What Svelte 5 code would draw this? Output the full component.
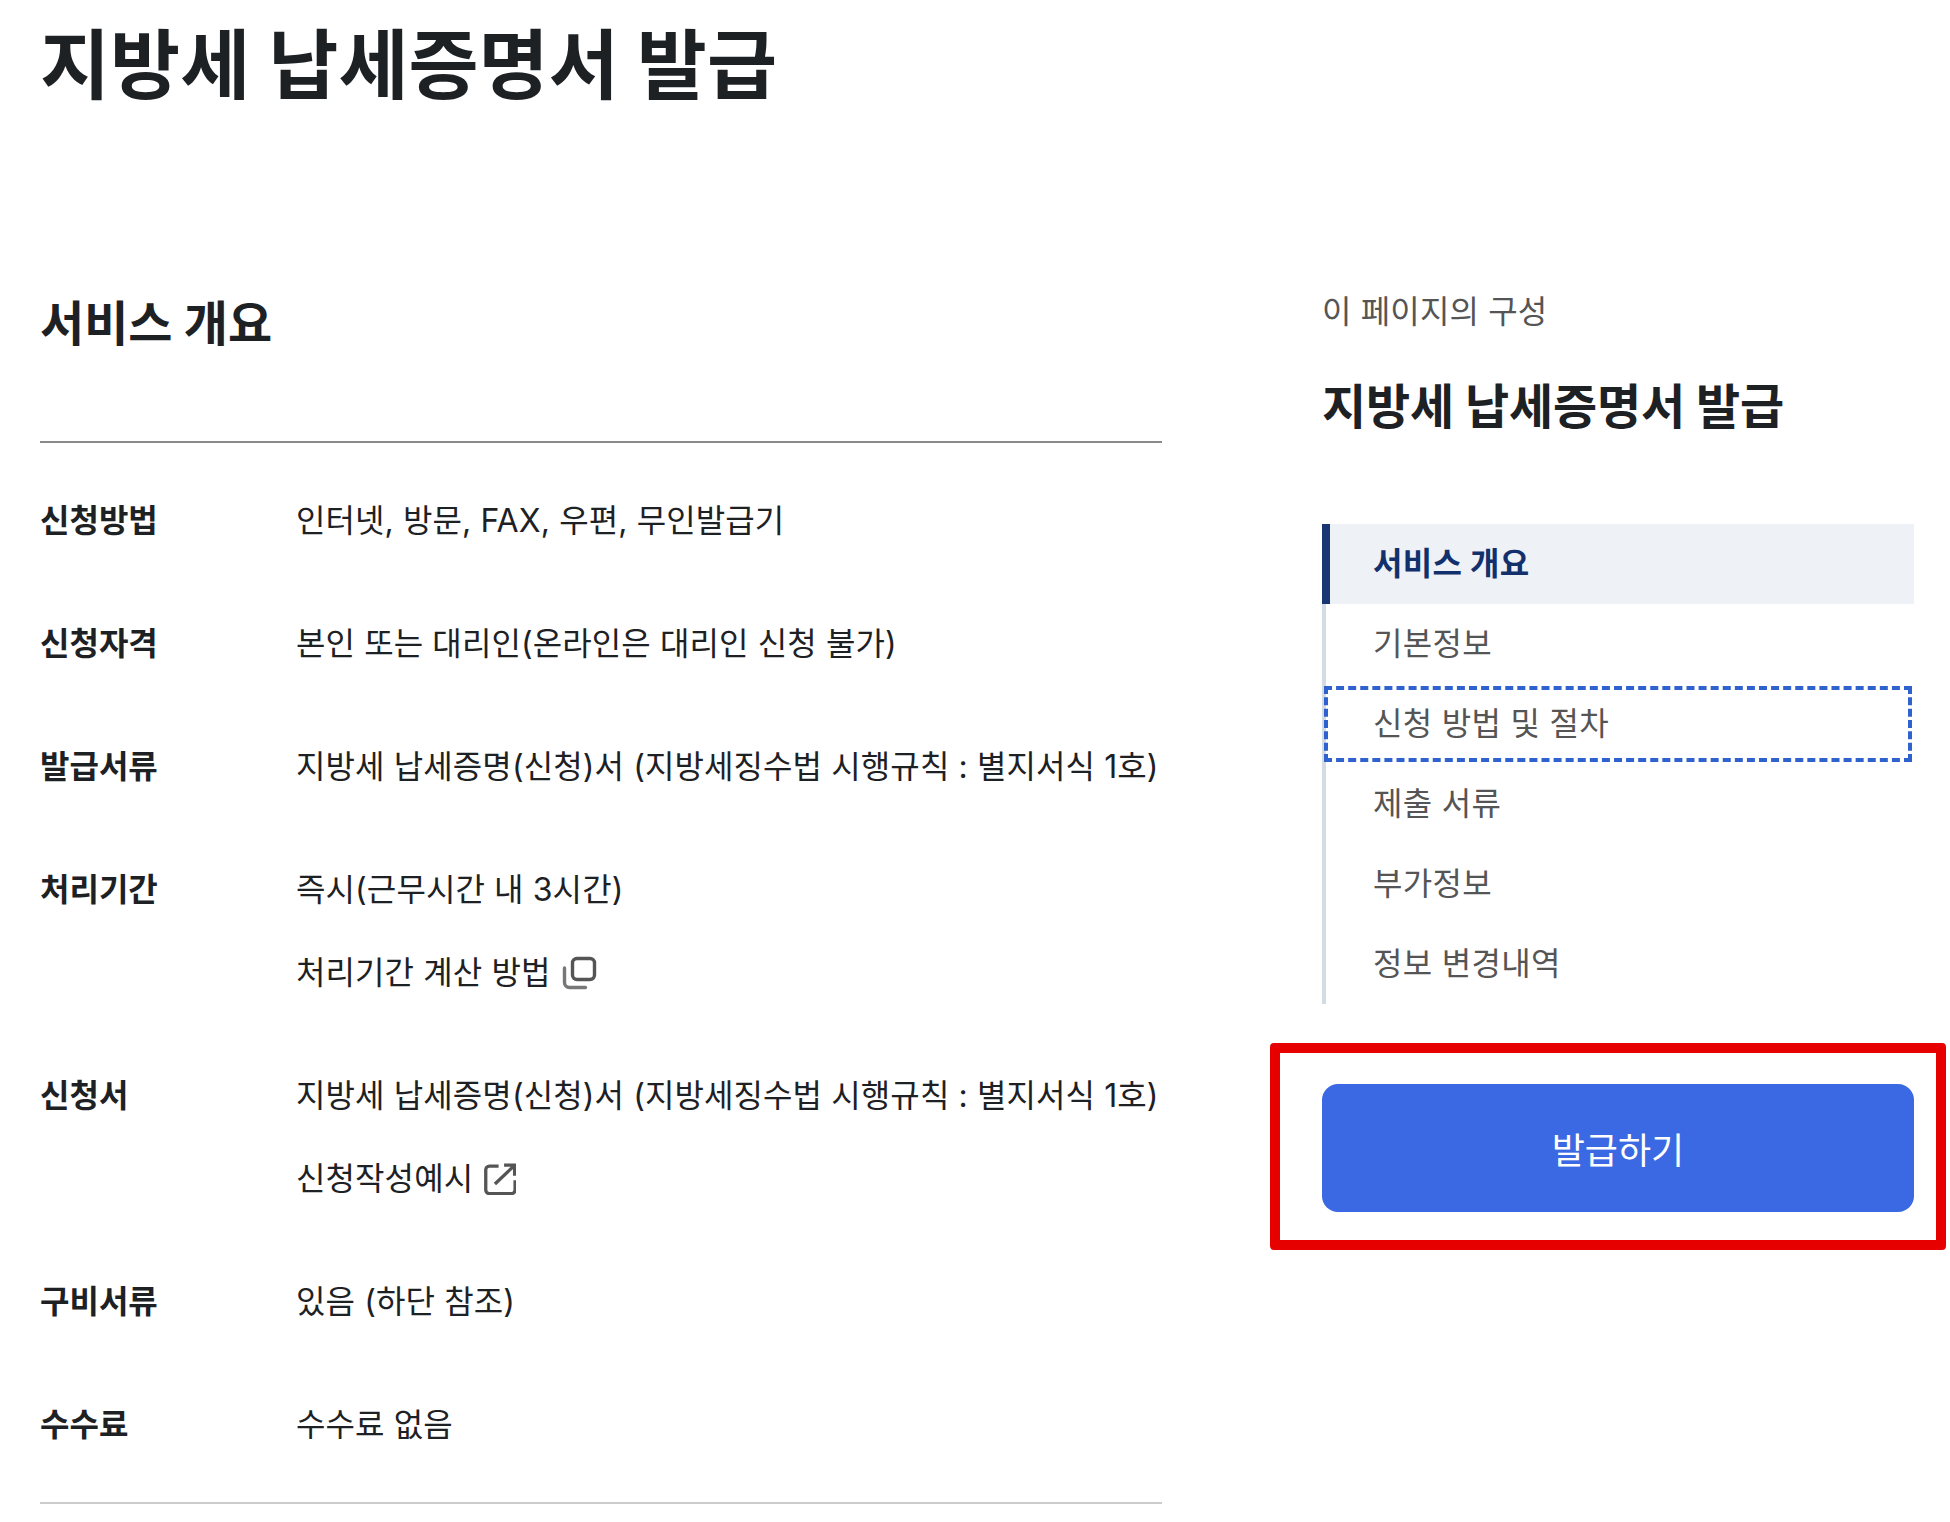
<script>
  const rows = [
    { label: "신청방법", lines: [{ text: "인터넷, 방문, FAX, 우편, 무인발급기" }] },
    { label: "신청자격", lines: [{ text: "본인 또는 대리인(온라인은 대리인 신청 불가)" }] },
    { label: "발급서류", lines: [{ text: "지방세 납세증명(신청)서 (지방세징수법 시행규칙 : 별지서식 1호)" }] },
    { label: "처리기간", lines: [{ text: "즉시(근무시간 내 3시간)" }, { text: "처리기간 계산 방법", icon: "copy" }] },
    { label: "신청서", lines: [{ text: "지방세 납세증명(신청)서 (지방세징수법 시행규칙 : 별지서식 1호)" }, { text: "신청작성예시", icon: "link" }] },
    { label: "구비서류", lines: [{ text: "있음 (하단 참조)" }] },
    { label: "수수료", lines: [{ text: "수수료 없음" }] }
  ];

  const navItems = ["서비스 개요", "기본정보", "신청 방법 및 절차", "제출 서류", "부가정보", "정보 변경내역"];
</script>

<div class="page">
  <h1 class="page-title">지방세 납세증명서 발급</h1>

  <div class="columns">
    <main class="content">
      <h2 class="section-title">서비스 개요</h2>
      <dl class="info-list">
        {#each rows as row}
          <div class="info-row">
            <dt class="info-label">{row.label}</dt>
            <dd class="info-value">
              {#each row.lines as line}
                <div class="info-line">
                  <span>{line.text}</span>
                  {#if line.icon === "copy"}
                    <svg class="icon copy" viewBox="0 0 36 36" fill="none" stroke="#555" stroke-width="3.4" aria-hidden="true">
                      <rect x="11.5" y="3.5" width="22" height="21" rx="4.5" />
                      <path d="M3.5 13v14.5a5 5 0 0 0 5 5h16" stroke-linecap="round" stroke="#777" />
                    </svg>
                  {:else if line.icon === "link"}
                    <svg class="icon link" viewBox="0 0 36 36" fill="none" stroke="#555" stroke-width="3.6" aria-hidden="true">
                      <path d="M17 4.5H7a4 4 0 0 0-4 4v22a4 4 0 0 0 4 4h24a4 4 0 0 0 4-4V20" />
                      <path d="M13 24 33 5M23 3.5h11.5V15" />
                    </svg>
                  {/if}
                </div>
              {/each}
            </dd>
          </div>
        {/each}
      </dl>
    </main>

    <aside class="side">
      <p class="side-caption">이 페이지의 구성</p>
      <h2 class="side-title">지방세 납세증명서 발급</h2>
      <ul class="side-nav">
        {#each navItems as item, i}
          <li class="nav-item" class:active={i === 0} class:focused={i === 2}>{item}</li>
        {/each}
      </ul>
      <div class="highlight">
        <button class="issue-button" type="button">발급하기</button>
      </div>
    </aside>
  </div>
</div>

<style>
  :global(body) {
    margin: 0;
    background: #fff;
  }

  .page {
    box-sizing: border-box;
    width: 1950px;
    height: 1522px;
    padding: 0 4px 0 40px;
    overflow: hidden;
    color: #1e2124;
    font-family: Inter, "Noto Sans CJK KR", sans-serif;
  }

  .page-title {
    margin: 0;
    font-size: 76.2px;
    font-weight: 700;
    line-height: 130px;
  }

  .columns {
    display: flex;
    align-items: flex-start;
    margin-top: 163px;
  }

  .content {
    flex: 0 0 1122px;
  }

  .section-title {
    margin: 0;
    padding-bottom: 86px;
    border-bottom: 2px solid #8a8a8a;
    font-size: 48px;
    font-weight: 700;
    line-height: 62px;
  }

  .info-list {
    margin: 0;
    padding: 36px 0 36px;
    border-bottom: 2px solid #ccc;
  }

  .info-row {
    display: flex;
    padding-bottom: 40px;
  }

  .info-row:last-child {
    padding-bottom: 0;
  }

  .info-label {
    flex: 0 0 256px;
    font-size: 32px;
    font-weight: 700;
    line-height: 83px;
  }

  .info-value {
    display: flex;
    flex-direction: column;
    margin: 0;
    font-size: 32px;
    letter-spacing: 0.1px;
    line-height: 83px;
  }

  .info-line {
    display: flex;
    align-items: center;
    gap: 12px;
    white-space: nowrap;
  }

  .icon {
    width: 36px;
    height: 36px;
  }

  .icon.copy {
    margin-left: -2px;
  }

  .icon.link {
    width: 33px;
    height: 33px;
    margin-left: -2px;
  }

  .side {
    flex: 0 0 592px;
    margin-top: -4px;
    margin-left: 160px;
  }

  .side-caption {
    margin: 0;
    color: #555;
    font-size: 32px;
    letter-spacing: 0.15px;
    line-height: 46px;
  }

  .side-title {
    margin: 41px 0 0;
    font-size: 48px;
    font-weight: 700;
    letter-spacing: -0.2px;
    line-height: 62px;
  }

  .side-nav {
    margin: 86px 0 0;
    padding: 0;
    list-style: none;
  }

  .nav-item {
    box-sizing: border-box;
    height: 80px;
    padding-left: 47px;
    border-left: 4px solid #d3dbe5;
    color: #555;
    font-size: 32px;
    letter-spacing: 0.3px;
    line-height: 80px;
  }

  .nav-item.active {
    padding-left: 43px;
    border-left: 8px solid #1a3672;
    background: #eef1f6;
    color: #12306b;
    font-weight: 700;
  }

  .nav-item.focused {
    outline: 4px dashed #2f62cf;
    outline-offset: -6px;
  }

  .highlight {
    margin: 39px -32px 0 -52px;
    padding: 31px 22px 28px 42px;
    border: 10px solid #e60000;
    border-radius: 4px;
  }

  .issue-button {
    display: block;
    width: 592px;
    height: 128px;
    padding: 0;
    border: 0;
    border-radius: 16px;
    background: #3b69e3;
    color: #fff;
    font-family: inherit;
    font-size: 36px;
  }
</style>
